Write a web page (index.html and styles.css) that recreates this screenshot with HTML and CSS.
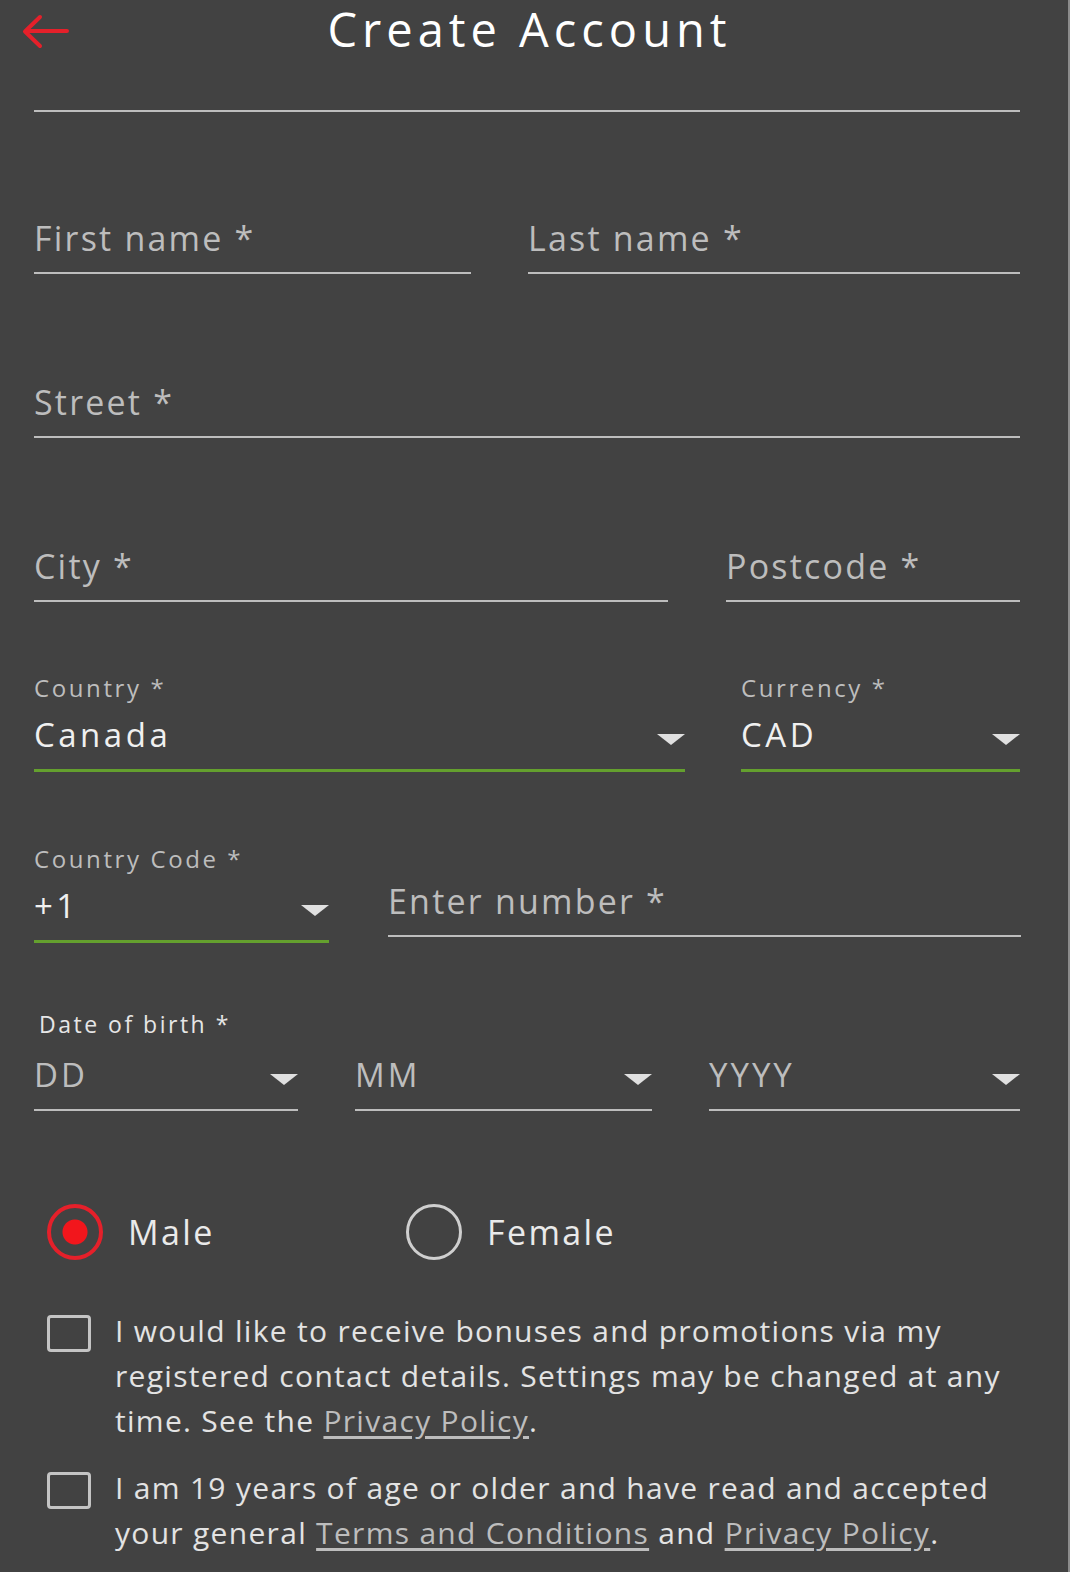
FILE: index.html
```html
<!DOCTYPE html>
<html lang="en">
<head>
    <meta charset="UTF-8">
    <meta name="viewport" content="width=device-width, initial-scale=1.0">
    <title>Create Account</title>
    <link rel="stylesheet" href="styles.css">
</head>
<body>
    <div class="page">
        <header class="top-bar">
            <a class="back-btn" href="#">
                <svg width="50" height="36" viewBox="0 0 50 36">
                    <path d="M47 17H6M20 3L5 17.5L20 32" fill="none" stroke="#e5202a" stroke-width="4" stroke-linecap="round" stroke-linejoin="round"/>
                </svg>
            </a>
            <h1>Create Account</h1>
        </header>

        <form class="form">
            <div class="row row-first">
                <div class="field"></div>
            </div>

            <div class="row row-name">
                <div class="field"><span class="placeholder">First name *</span></div>
                <div class="field"><span class="placeholder">Last name *</span></div>
            </div>

            <div class="row row-street">
                <div class="field"><span class="placeholder">Street *</span></div>
            </div>

            <div class="row row-city">
                <div class="field"><span class="placeholder">City *</span></div>
                <div class="field"><span class="placeholder">Postcode *</span></div>
            </div>

            <div class="row row-country">
                <div class="field select active">
                    <span class="label">Country *</span>
                    <span class="value">Canada</span>
                    <span class="caret"></span>
                </div>
                <div class="field select active">
                    <span class="label">Currency *</span>
                    <span class="value">CAD</span>
                    <span class="caret"></span>
                </div>
            </div>

            <div class="row row-phone">
                <div class="field select active">
                    <span class="label">Country Code *</span>
                    <span class="value">+1</span>
                    <span class="caret"></span>
                </div>
                <div class="field number"><span class="placeholder">Enter number *</span></div>
            </div>

            <div class="row row-dob">
                <span class="dob-label">Date of birth *</span>
                <div class="field select">
                    <span class="value dim">DD</span>
                    <span class="caret"></span>
                </div>
                <div class="field select">
                    <span class="value dim">MM</span>
                    <span class="caret"></span>
                </div>
                <div class="field select">
                    <span class="value dim">YYYY</span>
                    <span class="caret"></span>
                </div>
            </div>

            <div class="gender">
                <label class="radio checked"><span class="circle"></span>Male</label>
                <label class="radio"><span class="circle"></span>Female</label>
            </div>

            <label class="check">
                <span class="box"></span>
                <span class="check-text">I would like to receive bonuses and promotions via my registered contact details. Settings may be changed at any time. See the <a href="#">Privacy Policy</a>.</span>
            </label>

            <label class="check">
                <span class="box"></span>
                <span class="check-text">I am 19 years of age or older and have read and accepted your general <a href="#">Terms and Conditions</a> and <a href="#">Privacy Policy</a>.</span>
            </label>
        </form>
    </div>
</body>
</html>
```

FILE: styles.css
```css
body {
    margin: 0;
    padding: 0;
    background: #424242;
    font-family: "Open Sans", Lato, sans-serif;
    color: #e6e6e6;
}
.page {
    width: 1068px;
    min-height: 1572px;
    border-right: 2px solid #8c8c8c;
}
.top-bar {
    height: 64px;
    display: flex;
    justify-content: center;
    position: relative;
}
.back-btn {
    position: absolute;
    left: 20px;
    top: 14px;
}
.top-bar h1 {
    margin: 0 0 0 -9px;
    font-size: 47px;
    font-weight: 500;
    line-height: 58px;
    color: #fff;
    letter-spacing: 5px;
}
.form {
    padding: 0 48px 0 34px;
}
.row {
    display: grid;
    align-items: end;
}
.field {
    position: relative;
    box-sizing: border-box;
    height: 100%;
    border-bottom: 2px solid #bdbdbd;
    display: flex;
    flex-direction: column;
    justify-content: flex-end;
    padding-bottom: 14px;
}
.placeholder {
    font-size: 34px;
    line-height: 40px;
    letter-spacing: 2.2px;
    color: #bdbdbd;
}
.row-first {
    height: 48px;
}
.row-name {
    height: 162px;
    grid-template-columns: 437px 492px;
    column-gap: 57px;
}
.row-street {
    height: 164px;
}
.row-city {
    height: 164px;
    grid-template-columns: 634px 294px;
    column-gap: 58px;
}
.row-country {
    height: 170px;
    grid-template-columns: 651px 279px;
    column-gap: 56px;
}
.row-phone {
    height: 171px;
    grid-template-columns: 295px 633px;
    column-gap: 59px;
}
.row-phone .number {
    height: calc(100% - 6px);
    align-self: start;
}
.row-dob {
    height: 168px;
    grid-template-columns: 264px 297px 311px;
    column-gap: 57px;
    position: relative;
}
.select.active {
    border-bottom: 3px solid #64a02e;
}
.select .label {
    font-size: 24px;
    line-height: 30px;
    letter-spacing: 2.6px;
    color: #bdbdbd;
    margin-bottom: 12px;
}
.select .value {
    font-size: 33px;
    line-height: 40px;
    letter-spacing: 3.5px;
    color: #f0f0f0;
}
.select .value.dim {
    letter-spacing: 3px;
    color: #bdbdbd;
}
.caret {
    position: absolute;
    right: 0;
    bottom: 24px;
    width: 0;
    height: 0;
    border-left: 14px solid transparent;
    border-right: 14px solid transparent;
    border-top: 11px solid #e0e0e0;
}
.dob-label {
    position: absolute;
    left: 5px;
    top: 66px;
    font-size: 23px;
    line-height: 30px;
    letter-spacing: 2.5px;
    color: #e6e6e6;
}
.gender {
    display: flex;
    align-items: center;
    margin-top: 93px;
    padding-left: 13px;
    height: 56px;
}
.radio {
    display: flex;
    align-items: center;
    font-size: 34px;
    letter-spacing: 2.4px;
    color: #eaeaea;
    width: 359px;
}
.circle {
    box-sizing: border-box;
    width: 56px;
    height: 56px;
    border-radius: 50%;
    border: 3px solid #cfcfcf;
    margin-right: 25px;
}
.radio.checked .circle {
    border: 4px solid #e5202a;
    background: radial-gradient(circle, #f2161c 0 12px, transparent 13px);
}
.check {
    display: flex;
    align-items: flex-start;
    margin-top: 48px;
    padding-left: 13px;
}
.check + .check {
    margin-top: 22px;
}
.box {
    flex: none;
    box-sizing: border-box;
    width: 44px;
    height: 37px;
    border: 3px solid #c4c4c4;
    border-radius: 4px;
    margin-right: 24px;
    margin-top: 7px;
}
.check-text {
    width: 900px;
    font-size: 30px;
    line-height: 45px;
    letter-spacing: 1.3px;
    color: #e3e3e3;
}
.check-text a {
    color: #bdbdbd;
    text-decoration: underline;
    text-underline-offset: 4px;
}
```
